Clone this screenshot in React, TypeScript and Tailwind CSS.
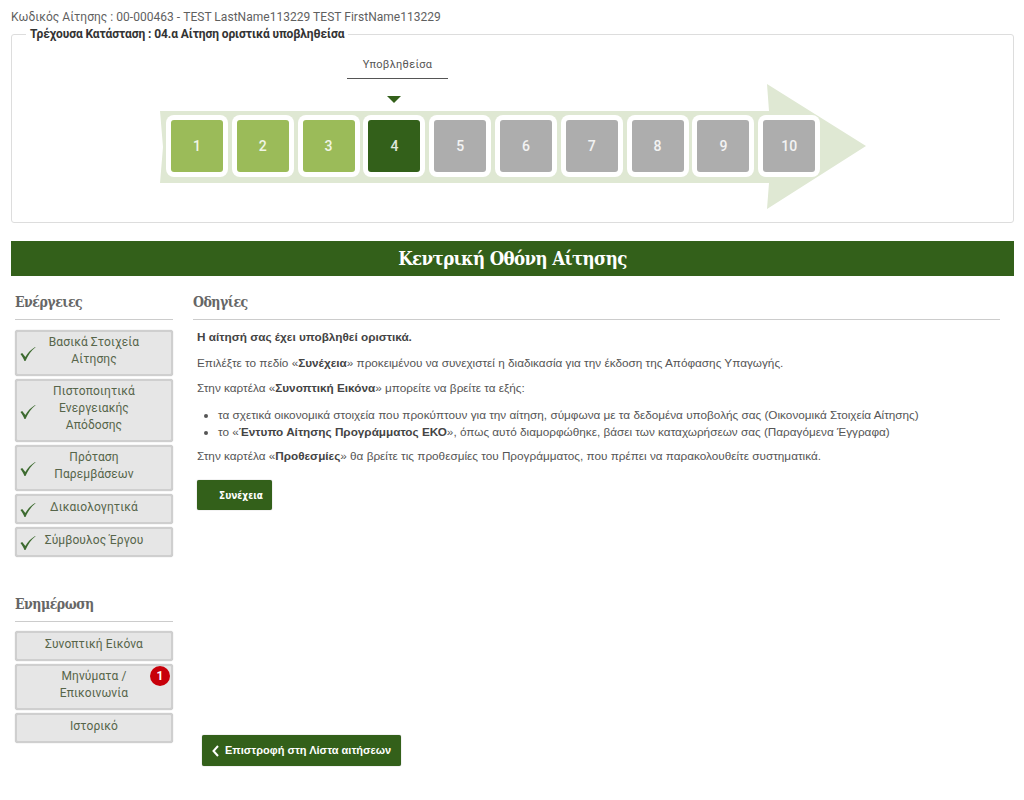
const steps = [1, 2, 3, 4, 5, 6, 7, 8, 9, 10];

function stepClass(step: number) {
  if (step < 4) return "bg-[#9bbb59]";
  if (step === 4) return "bg-[#33601a]";
  return "bg-[#adadad]";
}

function CheckMark() {
  return (
    <svg className="absolute top-1/2 left-[3px] -translate-y-[7px]" width="16" height="16" viewBox="0 0 18 17">
      <path d="M0.5 8.5 L2.5 7.5 L6 12 C8.5 7.5 12 3.5 17 0.5 L17.5 1 C12.5 5 9 10 6.2 16.5 L5 16.5 C4 13.5 2.5 11 0.5 8.5 Z" fill="#3d6b30" />
    </svg>
  );
}

function SideButton({
  lines,
  checked,
  badge,
}: {
  lines: string[];
  checked?: boolean;
  badge?: string;
}) {
  return (
    <button
      type="button"
      className="relative block min-h-[30px] w-full rounded-[3px] border-2 border-[#cfcfcf] bg-[#e6e6e6] pt-[2px] pb-[6px] text-center font-['Roboto',sans-serif] text-[12px] leading-[17px] tracking-[0.1px] text-[#56654a] shadow-[0_0_1px_#aaaaaa]"
    >
      {checked ? <CheckMark /> : null}
      {lines.map((line) => (
        <span key={line} className="block">
          {line}
        </span>
      ))}
      {badge ? (
        <span className="absolute top-0 right-[1px] flex size-[20px] items-center justify-center rounded-full bg-[#c8000a] text-[12px] font-bold tracking-normal text-white">
          {badge}
        </span>
      ) : null}
    </button>
  );
}

function SectionTitle({ children }: { children: string }) {
  return (
    <h2 className="h-[26px] border-b border-[#cccccc] font-['DejaVu_Serif_Condensed','DejaVu_Serif',serif] text-[14px] leading-[17px] font-bold tracking-[-0.5px] text-[#666666]">
      {children}
    </h2>
  );
}

export default function App() {
  return (
    <div className="h-[800px] overflow-hidden bg-white pt-[10px] pr-[10px] pl-[11px] font-['Liberation_Sans',sans-serif] text-[11.75px] text-[#555555]">
      <p className="font-['Roboto',sans-serif] text-[12px] leading-[14px] tracking-[0.03px] text-[#5f5f5f]">
        Κωδικός Αίτησης : 00-000463 - TEST LastName113229 TEST FirstName113229
      </p>

      <fieldset className="mt-[3px] h-[196px] rounded-[3px] border border-[#dddddd] px-[14px]">
        <legend className="px-[4px] font-['Roboto',sans-serif] text-[12px] leading-[14px] font-bold tracking-[-0.1px] text-[#333333]">
          Τρέχουσα Κατάσταση : 04.α Αίτηση οριστικά υποβληθείσα
        </legend>

        <div className="mt-[17px] ml-[321px] w-[101px] border-b border-[#555555] pb-[7px] text-center font-['Roboto',sans-serif] text-[11px] leading-[13px] tracking-[0.3px] text-[#555555]">
          Υποβληθείσα
        </div>
        <div className="mt-[17px] ml-[361px] h-0 w-0 border-x-[7px] border-t-[7px] border-x-transparent border-t-[#33601a]" />

        <div className="relative mt-[12px] ml-[140px] flex h-[62px] w-[660px] gap-[3.8px]">
          <svg className="absolute top-[-31px] left-[-6px]" width="708" height="126" viewBox="0 0 708 126">
            <path d="M0 27 H609 L607 0 L706 62 L607 125 L609 99 H0 L3 63 Z" fill="#dfe8d3" />
          </svg>
          {steps.map((step) => (
            <div key={step} className="relative size-[62px] shrink-0 rounded-[8px] bg-white p-[5px]">
              <div
                className={`flex size-[52px] items-center justify-center rounded-[3px] font-['Roboto',sans-serif] text-[14px] font-medium text-white/85 ${stepClass(step)}`}
              >
                {step}
              </div>
            </div>
          ))}
        </div>
      </fieldset>

      <h1 className="mt-[18px] h-[35px] bg-[#33601a] text-center font-['DejaVu_Serif_Condensed','DejaVu_Serif',serif] text-[18.5px] leading-[35px] font-bold tracking-[-0.6px] text-white">
        Κεντρική Οθόνη Αίτησης
      </h1>

      <div className="mt-[18px] flex gap-[20px] pl-[4px]">
        <aside className="w-[158px] shrink-0">
          <SectionTitle>Ενέργειες</SectionTitle>
          <div className="mt-[10px] flex flex-col gap-[3px]">
            <SideButton checked lines={["Βασικά Στοιχεία", "Αίτησης"]} />
            <SideButton checked lines={["Πιστοποιητικά", "Ενεργειακής", "Απόδοσης"]} />
            <SideButton checked lines={["Πρόταση", "Παρεμβάσεων"]} />
            <SideButton checked lines={["Δικαιολογητικά"]} />
            <SideButton checked lines={["Σύμβουλος Έργου"]} />
          </div>

          <div className="mt-[39px]">
            <SectionTitle>Ενημέρωση</SectionTitle>
          </div>
          <div className="mt-[9px] flex flex-col gap-[3px]">
            <SideButton lines={["Συνοπτική Εικόνα"]} />
            <SideButton badge="1" lines={["Μηνύματα /", "Επικοινωνία"]} />
            <SideButton lines={["Ιστορικό"]} />
          </div>
        </aside>

        <main className="min-w-0 flex-1 pr-[14px]">
          <SectionTitle>Οδηγίες</SectionTitle>
          <div className="mt-[10px] pl-[4px] leading-[14px]">
            <p className="font-bold text-[#444444]">Η αίτησή σας έχει υποβληθεί οριστικά.</p>
            <p className="mt-[12px]">
              Επιλέξτε το πεδίο «<b className="text-[#444444]">Συνέχεια</b>» προκειμένου να συνεχιστεί η διαδικασία για την έκδοση της Απόφασης Υπαγωγής.
            </p>
            <p className="mt-[11px]">
              Στην καρτέλα «<b className="text-[#444444]">Συνοπτική Εικόνα</b>» μπορείτε να βρείτε τα εξής:
            </p>
            <ul className="mt-[11px] list-disc pl-[21px] leading-[17px]">
              <li>τα σχετικά οικονομικά στοιχεία που προκύπτουν για την αίτηση, σύμφωνα με τα δεδομένα υποβολής σας (Οικονομικά Στοιχεία Αίτησης)</li>
              <li>
                το «<b className="text-[#444444]">Έντυπο Αίτησης Προγράμματος ΕΚΟ</b>», όπως αυτό διαμορφώθηκε, βάσει των καταχωρήσεων σας (Παραγόμενα Έγγραφα)
              </li>
            </ul>
            <p className="mt-[9px]">
              Στην καρτέλα «<b className="text-[#444444]">Προθεσμίες</b>» θα βρείτε τις προθεσμίες του Προγράμματος, που πρέπει να παρακολουθείτε συστηματικά.
            </p>
            <button
              type="button"
              className="mt-[17px] block h-[30px] w-[75px] rounded-[2px] bg-[#33601a] pt-[1px] pl-[22px] text-left font-['DejaVu_Sans_Condensed','DejaVu_Sans',sans-serif] text-[10px] font-bold text-white shadow-[0_0_1px_#777777]"
            >
              Συνέχεια
            </button>
          </div>
          <button
            type="button"
            className="mt-[225px] ml-[9px] flex h-[31px] w-[199px] items-center gap-[6px] rounded-[2px] bg-[#33601a] pl-[10px] text-[11px] font-bold whitespace-nowrap text-white shadow-[0_0_1px_#777777]"
          >
            <svg width="7" height="12" viewBox="0 0 7 12" fill="none" stroke="white" strokeWidth="2">
              <path d="M6 1 L1.5 6 L6 11" />
            </svg>
            Επιστροφή στη Λίστα αιτήσεων
          </button>
        </main>
      </div>
    </div>
  );
}
